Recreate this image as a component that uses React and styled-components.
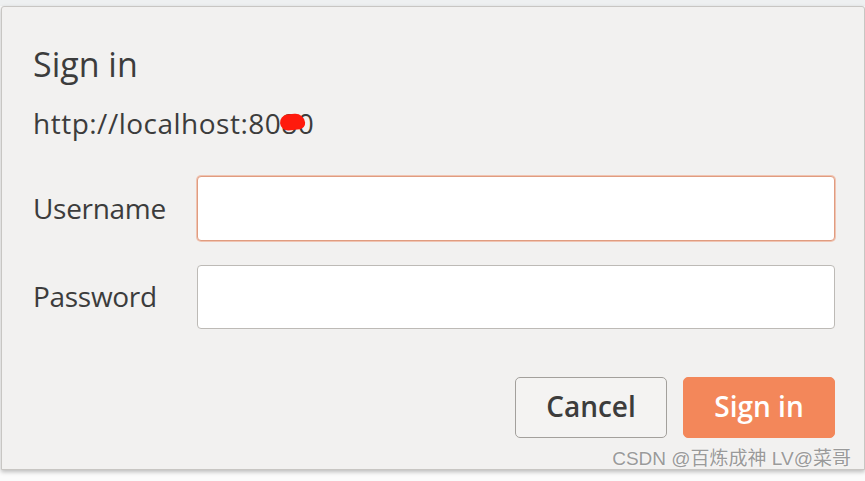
import styled, { createGlobalStyle } from "styled-components"

const GlobalStyle = createGlobalStyle`
	html, body {
		margin: 0;
		padding: 0;
		background: #f9f9f9;
	}
	body {
		font-family: "Open Sans", "Noto Sans", sans-serif;
	}
`

function App() {
	return (
		<>
			<GlobalStyle />
			<StyledPage>
				<StyledDialog>
					<StyledTitle>Sign in</StyledTitle>
					<StyledUrl>
						http://localhost:80
						<StyledMasked>
							8<StyledScribble />
						</StyledMasked>
						0
					</StyledUrl>
					<StyledForm>
						<StyledLabel htmlFor="username">Username</StyledLabel>
						<StyledInput id="username" type="text" $focused />
						<StyledLabel htmlFor="password">Password</StyledLabel>
						<StyledInput id="password" type="password" />
					</StyledForm>
					<StyledFooter>
						<StyledButton type="button">Cancel</StyledButton>
						<StyledButton type="button" $primary>
							Sign in
						</StyledButton>
					</StyledFooter>
					<StyledWatermark>CSDN @百炼成神 LV@菜哥</StyledWatermark>
				</StyledDialog>
			</StyledPage>
		</>
	)
}

const StyledPage = styled.div`
	width: 865px;
	height: 481px;
	padding: 6px 0 0 1px;
	box-sizing: border-box;
	background: linear-gradient(#eef0f1 0, #eef0f1 6px, #fbfbfb 6px);
	overflow: hidden;
`

const StyledDialog = styled.div`
	position: relative;
	display: flex;
	flex-direction: column;
	box-sizing: border-box;
	width: 864px;
	height: 464px;
	padding: 0 29px 0 31px;
	background: #f2f1f0;
	border: 1px solid #c8c6c3;
	border-radius: 3px 3px 0 0;
	box-shadow: 0 2px 4px rgba(0, 0, 0, 0.25);
	color: #3c3c3c;
`

const StyledTitle = styled.h1`
	margin: 33px 0 0;
	font-size: 34px;
	font-weight: 400;
	line-height: 48px;
`

const StyledUrl = styled.div`
	margin-top: 18px;
	font-size: 28px;
	line-height: 34px;
	letter-spacing: 0.5px;
`

const StyledMasked = styled.span`
	position: relative;
`

const StyledScribble = styled.span`
	position: absolute;
	left: -1px;
	top: 10px;
	width: 25px;
	height: 16px;
	background: #ff1a0d;
	border-radius: 9px 11px 7px 9px;
	transform: rotate(-6deg);
`

const StyledForm = styled.div`
	display: grid;
	grid-template-columns: 164px 1fr;
	grid-template-rows: 65px 64px;
	row-gap: 24px;
	align-items: center;
	margin-top: 36px;
`

const StyledLabel = styled.label`
	font-size: 28px;
	letter-spacing: -0.3px;
	line-height: 1;
	padding-bottom: 2px;
`

const StyledInput = styled.input`
	box-sizing: border-box;
	width: 638px;
	height: 100%;
	margin: 0;
	padding: 0 12px;
	background: #ffffff;
	border: 1px solid ${(p) => (p.$focused ? "#e09c80" : "#bdbab6")};
	border-radius: 4px;
	box-shadow: ${(p) => (p.$focused ? "0 0 0 1px #f0c4b2" : "none")};
	outline: none;
	font-size: 22px;
	font-family: inherit;
`

const StyledFooter = styled.div`
	display: flex;
	justify-content: flex-end;
	gap: 16px;
	margin-top: 48px;
`

const StyledButton = styled.button`
	box-sizing: border-box;
	width: 152px;
	height: 61px;
	margin: 0;
	padding: 0 0 4px;
	border: 1px solid ${(p) => (p.$primary ? "#f3875a" : "#a3a09c")};
	border-radius: 5px;
	background: ${(p) => (p.$primary ? "#f3875a" : "#f4f3f2")};
	color: ${(p) => (p.$primary ? "#ffffff" : "#3c3c3c")};
	font-family: inherit;
	font-size: 28px;
	font-weight: 600;
	cursor: pointer;
`

const StyledWatermark = styled.div`
	position: absolute;
	right: 13px;
	bottom: -3px;
	color: #9a9a9a;
	font-family: "Liberation Sans", "Noto Sans CJK SC", sans-serif;
	font-size: 19px;
	line-height: 26px;
	text-shadow: 0 0 2px #ffffff;
	white-space: nowrap;
`

export default App
